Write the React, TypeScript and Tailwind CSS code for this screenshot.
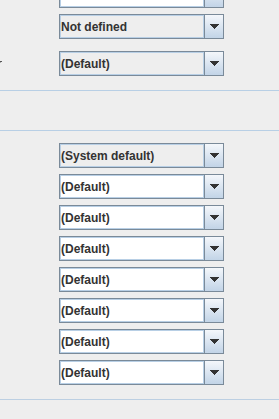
import React from "react";

function Arrow() {
  return (
    <svg width="9" height="5" viewBox="0 0 9 5" shapeRendering="crispEdges">
      <rect x="0" y="0" width="9" height="1" fill="#333333" />
      <rect x="1" y="1" width="7" height="1" fill="#333333" />
      <rect x="2" y="2" width="5" height="1" fill="#333333" />
      <rect x="3" y="3" width="3" height="1" fill="#333333" />
      <rect x="4" y="4" width="1" height="1" fill="#333333" />
    </svg>
  );
}

function Combo({ text, white, className = "" }: { text: string; white?: boolean; className?: string }) {
  return (
    <div className={`flex h-[25px] w-[165px] border border-[#7a8a99] ${className}`}>
      <div
        className={`flex flex-1 items-center border border-[#b8cfe5] ${white ? "bg-white" : "bg-[#eeeeee]"}`}
      >
        <span className="whitespace-nowrap text-[12px] font-bold leading-none text-[#333333] [font-family:'Liberation_Sans',Arial,sans-serif]">
          {text}
        </span>
      </div>
      <div className="flex w-[19px] items-center justify-center border-l border-[#7a8a99] bg-gradient-to-b from-[#f4f7fb] to-[#c2d4e7] pl-[1px]">
        <Arrow />
      </div>
    </div>
  );
}

export default function App() {
  const defaults = Array.from({ length: 7 });
  return (
    <div className="h-[419px] w-[279px] overflow-hidden bg-[#eeeeee]">
      <div className="flex flex-col pl-[59px]">
        <Combo text="" white className="-mt-[17px]" />
        <Combo text="Not defined" className="mt-[6px]" />
      </div>
      <div className="mt-[12px] flex">
        <div className="flex w-[59px] flex-col pt-[10px]">
          <div className="h-[1px] w-[2px] bg-[#555555]" />
          <div className="h-[1px] w-[1px] bg-[#aaaaaa]" />
        </div>
        <Combo text="(Default)" />
      </div>
      <div className="mt-[14px] h-[1px] w-full bg-[#b8cfe5]" />
      <div className="mt-[39px] h-[1px] w-full bg-[#b8cfe5]" />
      <div className="mt-[12px] flex flex-col gap-[6px] pl-[59px]">
        <Combo text="(System default)" />
        {defaults.map((_, i) => (
          <Combo key={i} text="(Default)" white />
        ))}
      </div>
      <div className="mt-[14px] h-[1px] w-full bg-[#bccfe2]" />
    </div>
  );
}
